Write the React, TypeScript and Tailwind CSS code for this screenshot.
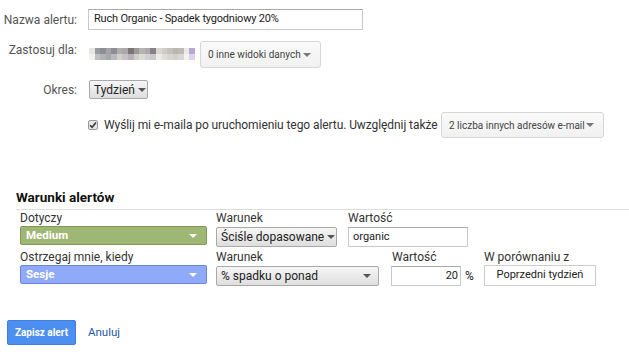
import React from 'react'

const blur = [
    '#e8e6e4', '#9a9aa2', '#8c8e98', '#a5a3a8', '#8e8f96', '#b2afae', '#a9a8ab', '#7a7478', '#9c999c', '#b6b4b0', '#aaaaad', '#85808a', '#d9d7d2', '#cfcbc6', '#c4c1bd', '#b8b5b3', '#bdbab7', '#ece9e6', '#b8a8d0',
]
const blur2 = [
    '#f4f2ef', '#c0bfc4', '#b2b3b8', '#a7a9a4', '#b9b8bb', '#d3d0cc', '#c6c3c4', '#b4b2b6', '#d0cdca', '#dedbd7', '#d1d0d3', '#c9c8cb', '#eeece8', '#e0ddd8', '#d8d5d0', '#d2cfcc', '#dad7d4', '#f5f3f1', '#dcd2ea',
]

function Caret({ className = 'border-t-[#666]' }: { className?: string }) {
    return <span className={`inline-block shrink-0 w-0 h-0 border-l-[4px] border-r-[4px] border-t-[4px] border-l-transparent border-r-transparent ${className}`} />
}

export default function App() {
    return (
        <div className="w-[629px] h-[355px] bg-white text-[#333] overflow-hidden whitespace-nowrap" style={{ fontFamily: 'Roboto, "Liberation Sans", sans-serif' }}>
            {/* Form */}
            <div className="pt-[9px]">
                <div className="flex items-center h-[21px]">
                    <span className="w-[77px] shrink-0 text-right text-[12px] text-[#555]">Nazwa alertu:</span>
                    <div className="ml-[11px] shrink-0 w-[275px] h-[21px] border border-[#c8c8c8] border-t-[#a9a9a9] flex items-center px-[5px] text-[11px] tracking-[-0.2px] text-[#222]">
                        Ruch Organic - Spadek tygodniowy 20%
                    </div>
                </div>

                <div className="flex items-start mt-[11px] h-[27px]">
                    <span className="w-[77px] shrink-0 text-right text-[12px] text-[#555] leading-[15px] mt-[2px]">Zastosuj dla:</span>
                    <div className="ml-[12px] shrink-0 mt-[7px] w-[106px] flex flex-col">
                        <div className="flex h-[6px]">
                            {blur.map((c, i) => <span key={i} className="flex-1" style={{ background: c }} />)}
                        </div>
                        <div className="flex h-[6px]">
                            {blur2.map((c, i) => <span key={i} className="flex-1" style={{ background: c }} />)}
                        </div>
                    </div>
                    <div className="ml-[5px] shrink-0 w-[121px] h-[27px] rounded-[3px] border border-[#d6d6d6] bg-gradient-to-b from-[#fafafa] to-[#f1f1f1] flex items-center justify-between pl-[7px] pr-[9px] text-[10px] text-[#444]">
                        <span>0 inne widoki danych</span>
                        <Caret className="border-t-[#777]" />
                    </div>
                </div>

                <div className="flex items-center mt-[12px] h-[19px]">
                    <span className="w-[77px] shrink-0 text-right text-[12px] text-[#555]">Okres:</span>
                    <div className="ml-[12px] shrink-0 w-[59px] h-[19px] border border-[#a9a9a9] rounded-[2px] bg-gradient-to-b from-[#f6f6f6] to-[#dedede] flex items-center pl-[4px] gap-[3px] text-[12px] text-[#222]">
                        <span>Tydzień</span>
                        <Caret className="border-t-[#555]" />
                    </div>
                </div>

                <div className="flex items-center mt-[13px] h-[26px] pl-[88px]">
                    <div className="w-[10px] h-[10px] shrink-0 border border-[#9a9a9a] rounded-[2px] bg-[#e6e6e6] flex items-center justify-center">
                        <svg width="8" height="8" viewBox="0 0 8 8">
                            <path d="M1 4.2 L3.1 6.3 L7 1.4" stroke="#3a3a3a" strokeWidth="1.6" fill="none" />
                        </svg>
                    </div>
                    <span className="ml-[6px] w-[332px] shrink-0 text-[12px] tracking-[-0.08px] text-[#333]">Wyślij mi e-maila po uruchomieniu tego alertu. Uwzględnij także</span>
                    <div className="ml-[5px] shrink-0 w-[163px] h-[26px] rounded-[3px] border border-[#d6d6d6] bg-gradient-to-b from-[#fafafa] to-[#f1f1f1] flex items-center justify-between pl-[7px] pr-[9px] text-[10px] text-[#444]">
                        <span>2 liczba innych adresów e-mail</span>
                        <Caret className="border-t-[#777]" />
                    </div>
                </div>
            </div>

            {/* Warunki */}
            <div className="ml-[16px] mt-[50px]">
                <div className="text-[13.5px] font-bold text-[#111] leading-[18px] pb-[3px] border-b border-[#ddd]">Warunki alertów</div>

                <div className="pl-[4px] flex text-[12px] text-[#333]">
                    <div className="w-[196px] shrink-0">
                        <div className="h-[16px] leading-[16px]">Dotyczy</div>
                        <div className="w-[187px] h-[19px] bg-[#9fb774] border border-[#7f9a55] rounded-[2px] flex items-center justify-between pl-[5px] pr-[9px] text-white font-bold text-[11.5px]">
                            <span>Medium</span>
                            <Caret className="border-t-white" />
                        </div>
                    </div>
                    <div className="w-[132px] shrink-0">
                        <div className="h-[16px] leading-[16px]">Warunek</div>
                        <div className="mt-[1px] w-[121px] h-[20px] border border-[#a9a9a9] rounded-[2px] bg-gradient-to-b from-[#f6f6f6] to-[#dedede] flex items-center pl-[4px] gap-[3px] text-[12px] text-[#222]">
                            <span>Ściśle dopasowane</span>
                            <Caret className="border-t-[#555]" />
                        </div>
                    </div>
                    <div className="shrink-0">
                        <div className="h-[16px] leading-[16px]">Wartość</div>
                        <div className="mt-[1px] w-[120px] h-[20px] border border-[#c8c8c8] border-t-[#a9a9a9] flex items-center px-[4px] text-[11px] text-[#222]">organic</div>
                    </div>
                </div>

                <div className="pl-[4px] flex text-[12px] text-[#333] mt-[2px]">
                    <div className="w-[196px] shrink-0">
                        <div className="h-[16px] leading-[16px]">Ostrzegaj mnie, kiedy</div>
                        <div className="w-[187px] h-[19px] bg-[#8eaaf8] border border-[#6b86d6] rounded-[2px] flex items-center justify-between pl-[5px] pr-[9px] text-white font-bold text-[11.5px]">
                            <span>Sesje</span>
                            <Caret className="border-t-white" />
                        </div>
                    </div>
                    <div className="w-[175px] shrink-0">
                        <div className="h-[16px] leading-[16px]">Warunek</div>
                        <div className="mt-[1px] w-[163px] h-[20px] border border-[#a9a9a9] rounded-[2px] bg-gradient-to-b from-[#f6f6f6] to-[#dedede] flex items-center justify-between pl-[4px] pr-[7px] text-[12px] text-[#222]">
                            <span>% spadku o ponad</span>
                            <Caret className="border-t-[#555]" />
                        </div>
                    </div>
                    <div className="w-[93px] shrink-0">
                        <div className="h-[16px] leading-[16px] pl-[1px]">Wartość</div>
                        <div className="mt-[1px] flex items-center">
                            <div className="w-[70px] h-[20px] border border-[#c8c8c8] border-t-[#a9a9a9] flex items-center justify-end pr-[2px] text-[11px] text-[#222]">20</div>
                            <span className="ml-[4px] text-[12px] text-[#222]">%</span>
                        </div>
                    </div>
                    <div className="shrink-0">
                        <div className="h-[16px] leading-[16px]">W porównaniu z</div>
                        <div className="w-[112px] h-[21px] border border-[#ccc] flex items-center justify-center text-[11px] text-[#222]">Poprzedni tydzień</div>
                    </div>
                </div>
            </div>

            {/* Buttons */}
            <div className="flex items-center mt-[34px] pl-[7px]">
                <button className="w-[69px] h-[25px] rounded-[2px] bg-[#4d8ff0] border border-[#3f7de0] text-white text-[10px] font-bold">Zapisz alert</button>
                <a className="ml-[12px] text-[11.5px] text-[#1f56a8]">Anuluj</a>
            </div>
        </div>
    )
}
